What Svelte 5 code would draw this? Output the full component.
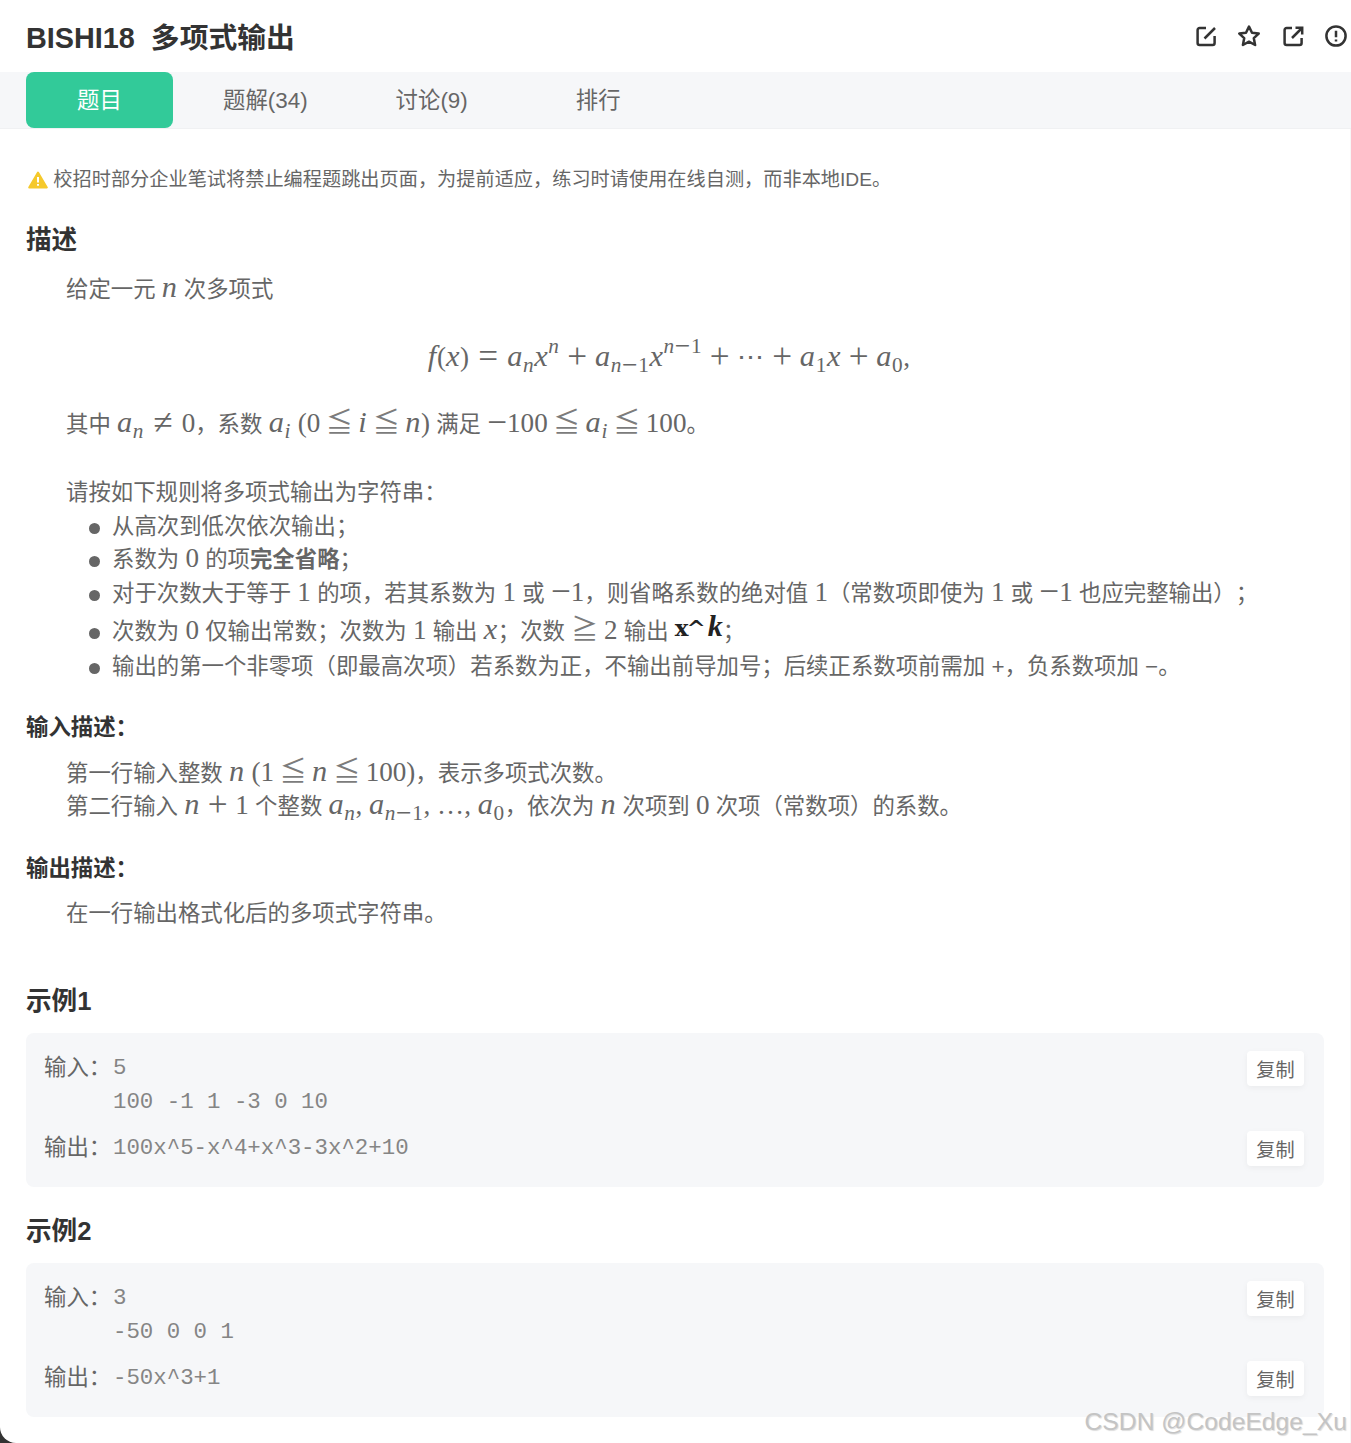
<script lang="ts">
  interface Sample {
    readonly title: string;
    readonly input: string;
    readonly output: string;
  }

  const tabs: readonly string[] = ["题解(34)", "讨论(9)", "排行"];

  const samples: readonly Sample[] = [
    { title: "示例1", input: "5\n100 -1 1 -3 0 10", output: "100x^5-x^4+x^3-3x^2+10" },
    { title: "示例2", input: "3\n-50 0 0 1", output: "-50x^3+1" }
  ];
</script>

{#snippet nMinusOne()}n<span class="u"><b class="n">−</b>1</span>{/snippet}
{#snippet leq()}<b class="r le">≦</b>{/snippet}

<div class="page">
  <header class="head">
    <h1>BISHI18&nbsp; 多项式输出</h1>
    <div class="actions">
      <svg viewBox="0 0 22 22" aria-label="edit">
        <path d="M11 3H4.600A2 2 0 0 0 2.600 5V18A2 2 0 0 0 4.600 20H17.600A2 2 0 0 0 19.600 18V11" />
        <path d="M9.500 13.500L20 3" />
      </svg>
      <svg viewBox="0 0 22 22" aria-label="star">
        <path d="M11 1.600L14 7.700L20.700 8.600L15.800 13.200L17.100 20L11 16.700L4.900 20L6.200 13.200L1.300 8.600L8 7.700Z" stroke-linejoin="round" />
      </svg>
      <svg viewBox="0 0 22 22" aria-label="share">
        <path d="M10 3H4.600A2 2 0 0 0 2.600 5V18A2 2 0 0 0 4.600 20H17.600A2 2 0 0 0 19.600 18V13" />
        <path d="M10 13L19.500 3.500M13.500 2.800H20.200V9.500" />
      </svg>
      <svg viewBox="0 0 22 22" aria-label="report">
        <circle cx="11" cy="11" r="9.600" />
        <path d="M11 5.800V12.200M11 14.600V16.400" />
      </svg>
    </div>
  </header>

  <nav class="tabs">
    <span class="tab active">题目</span>
    {#each tabs as tab, index (tab)}
      <span class={`tab t${String(index)}`}>{tab}</span>
    {/each}
  </nav>

  <main class="body">
    <p class="notice">
      <svg viewBox="0 0 20 18" aria-hidden="true">
        <path d="M10 1.500L18.800 16.500H1.200Z" fill="#f5c92c" stroke="#f5c92c" stroke-width="2" stroke-linejoin="round" />
        <path d="M10 6V11.500M10 13V14.800" stroke="#fff" stroke-width="2" />
      </svg>
      校招时部分企业笔试将禁止编程题跳出页面，为提前适应，练习时请使用在线自测，而非本地IDE。
    </p>

    <h2 class="desc">描述</h2>
    <p class="text first">给定一元 <span class="m"><i>n</i></span> 次多项式</p>
    <p class="formula">
      <span class="m"><i>f</i>(<i>x</i>)<b class="r">=</b><i>a<sub>n</sub>x<sup>n</sup></i><b class="o">+</b><i>a<sub>{@render nMinusOne()}</sub>x<sup>{@render nMinusOne()}</sup></i><b class="o">+</b>⋯<b class="o">+</b><i>a<sub class="u">1</sub>x</i><b class="o">+</b><i>a<sub class="u">0</sub></i>,</span>
    </p>
    <p class="text where">
      其中 <span class="m"><i>a<sub>n</sub></i><b class="r">≠</b>0</span>，系数 <span class="m"><i>a<sub>i</sub></i> (0{@render leq()}<i>i</i>{@render leq()}<i>n</i>)</span> 满足 <span class="m"><b class="n">−</b>100{@render leq()}<i>a<sub>i</sub></i>{@render leq()}100</span>。
    </p>
    <p class="text rules">请按如下规则将多项式输出为字符串：</p>
    <ul>
      <li>从高次到低次依次输出；</li>
      <li>系数为 <span class="m">0</span> 的项<strong>完全省略</strong>；</li>
      <li>对于次数大于等于 <span class="m">1</span> 的项，若其系数为 <span class="m">1</span> 或 <span class="m"><b class="n">−</b>1</span>，则省略系数的绝对值 <span class="m">1</span>（常数项即使为 <span class="m">1</span> 或 <span class="m"><b class="n">−</b>1</span> 也应完整输出）；</li>
      <li class="tall">次数为 <span class="m">0</span> 仅输出常数；次数为 <span class="m">1</span> 输出 <span class="m"><i>x</i></span>；次数 <span class="m"><b class="le ge">≧</b> 2</span> 输出 <span class="power"><code>x^</code><em>k</em></span>；</li>
      <li>输出的第一个非零项（即最高次项）若系数为正，不输出前导加号；后续正系数项前需加 +，负系数项加 −。</li>
    </ul>

    <h3>输入描述：</h3>
    <p class="text lead first-lead">第一行输入整数 <span class="m"><i>n</i> (1{@render leq()}<i>n</i>{@render leq()}100)</span>，表示多项式次数。</p>
    <p class="text">第二行输入 <span class="m"><i>n</i><b class="o">+</b>1</span> 个整数 <span class="m"><i>a<sub>n</sub></i>, <i>a<sub>{@render nMinusOne()}</sub></i>, …, <i>a<sub class="u">0</sub></i></span>，依次为 <span class="m"><i>n</i></span> 次项到 <span class="m">0</span> 次项（常数项）的系数。</p>

    <h3 class="out">输出描述：</h3>
    <p class="text lead">在一行输出格式化后的多项式字符串。</p>

    {#each samples as sample, index (sample.title)}
      <h2 class={index === 0 ? "sample first-sample" : "sample"}>{sample.title}</h2>
      <section class="box">
        <div class="row">
          <span class="label">输入：</span>
          <pre>{sample.input}</pre>
          <button type="button">复制</button>
        </div>
        <div class="row">
          <span class="label">输出：</span>
          <pre>{sample.output}</pre>
          <button type="button">复制</button>
        </div>
      </section>
    {/each}
  </main>

  <span class="mark">CSDN @CodeEdge_Xu</span>
</div>

<style>
  :global(body) {
    background: #333;
  }

  .page {
    position: relative;
    height: 1443px;
    overflow: hidden;
    background: #fff;
    border-bottom-left-radius: 16px;
    color: #666;
    font-family: "Liberation Sans", "Noto Sans CJK SC", sans-serif;
    text-spacing-trim: space-all;
  }

  .head {
    height: 72px;
    padding: 0 4px 0 26px;
    display: flex;
    align-items: center;
    justify-content: space-between;
  }

  h1 {
    margin: -2px 0 0;
    color: #333;
    font-size: 28.8px;
    font-weight: 700;
  }

  .actions {
    display: flex;
    gap: 21.5px;
  }

  .actions svg {
    width: 22px;
    height: 22px;
    fill: none;
    stroke: #333;
    stroke-width: 2.5;
  }

  .tabs {
    height: 56px;
    padding-left: 26px;
    background: #f6f7f9;
    border-bottom: 1px solid #f0f1f3;
    display: flex;
    font-size: 22.4px;
    line-height: 57px;
  }

  .tab {
    white-space: nowrap;
  }

  .active {
    width: 147px;
    border-radius: 8px;
    background: #32ca99;
    color: #fff;
    text-align: center;
  }

  .t0 {
    margin-left: 50px;
  }

  .t1 {
    margin-left: 88px;
  }

  .t2 {
    margin-left: 108px;
  }

  .body {
    height: 1314px;
    padding: 0 26px;
    border-right: 1px solid #f7f7f7;
    overflow: hidden;
  }

  p,
  h2,
  h3,
  ul {
    margin: 0;
  }

  .notice {
    margin-top: 36px;
    padding-left: 2px;
    font-size: 19.2px;
    line-height: 30px;
    white-space: nowrap;
  }

  .notice svg {
    width: 20px;
    height: 18px;
    vertical-align: -3px;
  }

  h2 {
    color: #333;
    font-size: 25.6px;
    font-weight: 700;
    line-height: 38px;
  }

  .desc {
    margin-top: 26px;
  }

  h3 {
    margin-top: 29px;
    color: #333;
    font-size: 22.4px;
    font-weight: 700;
    line-height: 30px;
  }

  .out {
    margin-top: 30px;
  }

  .text {
    padding-left: 40px;
    font-size: 22.4px;
    line-height: 33.6px;
    white-space: nowrap;
  }

  .first {
    margin-top: 14px;
  }

  .formula {
    margin-top: 21.4px;
    padding-top: 3px;
    padding-right: 12px;
    line-height: 60px;
    text-align: center;
  }

  .where {
    margin-top: 17px;
  }

  .rules {
    margin-top: 34px;
  }

  .lead {
    margin-top: 13px;
  }

  .first-lead {
    margin-top: 14px;
  }

  ul {
    margin-top: 0.6px;
    padding-left: 63px;
    list-style: none;
    font-size: 22.4px;
    line-height: 33.6px;
    white-space: nowrap;
  }

  li::before {
    content: "";
    display: inline-block;
    width: 11px;
    height: 11px;
    margin-right: 12px;
    border-radius: 50%;
    background: #666;
    vertical-align: 0;
  }

  .tall {
    height: 39.4px;
    line-height: 42px;
  }

  strong {
    font-weight: 700;
  }

  .m {
    font-family: "Liberation Serif", "DejaVu Serif", serif;
    font-size: 27.1px;
    line-height: 0;
  }

  .m i {
    font-size: 1.12em;
    letter-spacing: 0.02em;
  }

  .m b {
    font-weight: 400;
    font-size: 1.3em;
    vertical-align: -0.06em;
  }

  .m .n {
    font-size: 1.3em;
    font-style: normal;
  }

  .m .le {
    margin: 0 0.2em;
    color: #7c7c7c;
    font-family: "Noto Sans CJK SC", sans-serif;
    font-size: 1em;
    vertical-align: 0;
  }

  .m .ge {
    margin: 0 -1px 0 0;
  }

  .r {
    margin: 0 0.26em;
  }

  .o {
    margin: 0 0.22em;
  }

  sub,
  sup {
    font-size: 70%;
    line-height: 0;
  }

  sub {
    vertical-align: -0.3em;
  }

  sup {
    vertical-align: 0.6em;
  }

  .u {
    font-style: normal;
  }

  .power {
    color: #222;
    line-height: 0;
    position: relative;
    top: -3px;
  }

  code {
    font-family: "DejaVu Serif", serif;
    font-size: 23px;
    font-weight: 700;
    letter-spacing: -2px;
  }

  em {
    margin-left: 4px;
    font-family: "Liberation Serif", serif;
    font-size: 30px;
    font-style: italic;
    font-weight: 700;
  }

  .sample {
    margin-top: 25px;
  }

  .first-sample {
    margin-top: 52px;
  }

  .box {
    margin-top: 13px;
    height: 154px;
    box-sizing: border-box;
    padding: 18px 20px 0 18px;
    border-radius: 8px;
    background: #f6f7f9;
    display: grid;
    align-content: start;
    gap: 12px;
  }

  .row {
    display: flex;
    align-items: flex-start;
  }

  .label {
    width: 69px;
    flex: none;
    font-size: 22.4px;
    line-height: 34px;
  }

  pre {
    flex: 1;
    margin: 0;
    color: #858585;
    font-family: "Liberation Mono", monospace;
    font-size: 22.4px;
    line-height: 34px;
  }

  button {
    width: 57px;
    height: 35px;
    padding: 0;
    border: 0;
    border-radius: 4px;
    background: #fff;
    box-shadow: 0 2px 6px rgba(0, 0, 0, 0.05);
    color: #666;
    font-family: inherit;
    font-size: 19.2px;
  }

  .mark {
    position: absolute;
    right: 4px;
    bottom: 7px;
    color: #c4c4c4;
    font-size: 24.7px;
    text-shadow: 1px 1px 1px #dcdcdc;
    white-space: nowrap;
  }
</style>
